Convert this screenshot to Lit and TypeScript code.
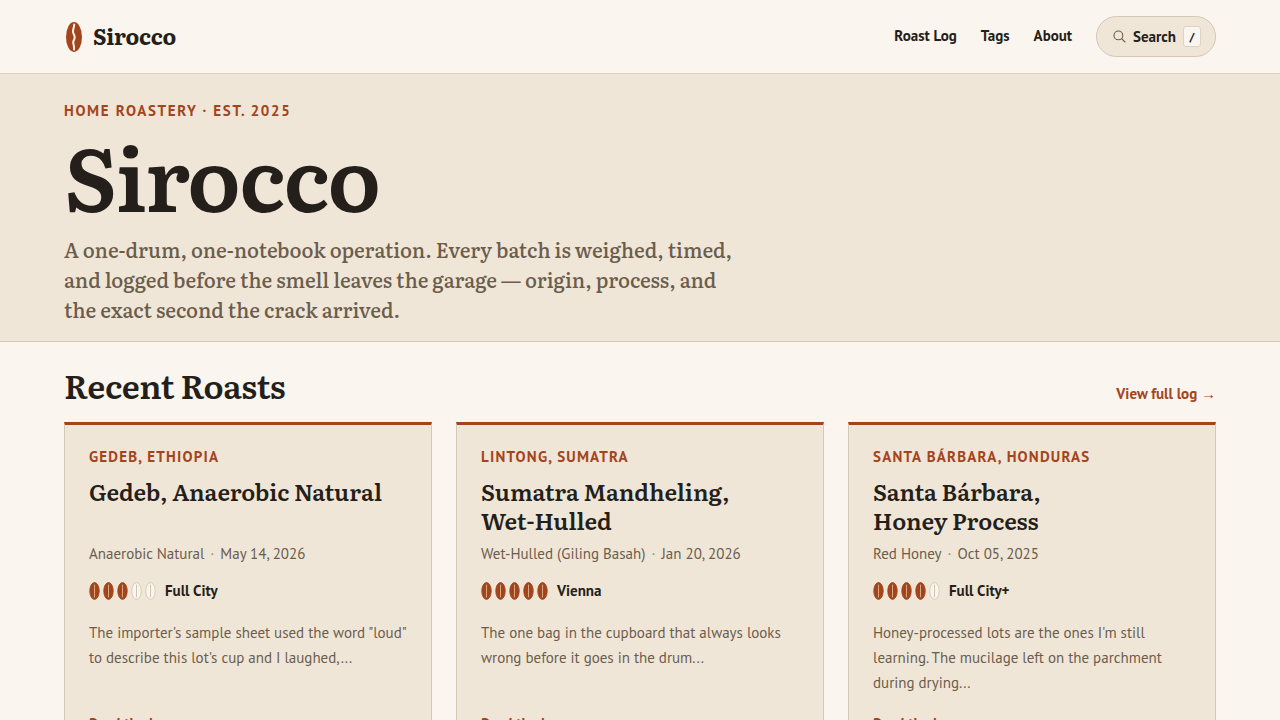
import { LitElement, html, css } from "lit";
import { customElement, property } from "lit/decorators.js";

interface Roast {
  origin: string;
  title: string;
  process: string;
  date: string;
  level: number;
  levelName: string;
  excerpt: string;
}

const roasts: Roast[] = [
  {
    origin: "Gedeb, Ethiopia",
    title: "Gedeb, Anaerobic Natural",
    process: "Anaerobic Natural",
    date: "May 14, 2026",
    level: 3,
    levelName: "Full City",
    excerpt: "The importer's sample sheet used the word \"loud\" to describe this lot's cup and I laughed,...",
  },
  {
    origin: "Lintong, Sumatra",
    title: "Sumatra Mandheling, Wet-Hulled",
    process: "Wet-Hulled (Giling Basah)",
    date: "Jan 20, 2026",
    level: 5,
    levelName: "Vienna",
    excerpt: "The one bag in the cupboard that always looks wrong before it goes in the drum...",
  },
  {
    origin: "Santa Bárbara, Honduras",
    title: "Santa Bárbara, Honey Process",
    process: "Red Honey",
    date: "Oct 05, 2025",
    level: 4,
    levelName: "Full City+",
    excerpt: "Honey-processed lots are the ones I'm still learning. The mucilage left on the parchment during drying...",
  },
];

@customElement("roast-card")
class RoastCard extends LitElement {
  @property({ attribute: false }) roast!: Roast;

  static styles = css`
    :host {
      display: block;
      box-sizing: border-box;
      padding: 23px 24px 24px;
      background: #f0e6d8;
      border: 1px solid #d3c8b6;
      border-top: 3px solid #a3451c;
    }
    .origin {
      margin: 0 0 12px;
      color: #a3451c;
      font-size: 15px;
      line-height: 17px;
      font-weight: 700;
      letter-spacing: 0.08em;
      text-transform: uppercase;
    }
    .title {
      margin: 0 0 9px;
      min-height: 58px;
      font-family: "Literata", "Liberation Serif", serif;
      font-size: 23px;
      line-height: 29px;
      font-weight: 600;
      text-wrap: balance;
    }
    .meta {
      display: flex;
      gap: 6px;
      margin: 0 0 16px;
      color: #6b5d4c;
      line-height: 20px;
    }
    .dot {
      opacity: 0.7;
    }
    .level {
      display: flex;
      align-items: center;
      gap: 9px;
      margin: 0 0 18px;
      line-height: 22px;
      font-weight: 700;
    }
    .beans {
      display: flex;
      gap: 3px;
    }
    .bean {
      display: block;
      width: 11px;
      height: 18px;
      fill: #faf5ee;
      stroke: #d3c8b6;
    }
    .bean.filled {
      fill: #a3451c;
      stroke: #a3451c;
    }
    .seam {
      stroke: #c9bda9;
    }
    .filled .seam {
      stroke: #dcb396;
    }
    .excerpt {
      margin: 0 0 17px;
      min-height: 75px;
      color: #6b5d4c;
      line-height: 25px;
    }
    .more {
      color: #a3451c;
      font-weight: 700;
      line-height: 20px;
      text-decoration: none;
    }
  `;

  render() {
    const r = this.roast;
    return html`
      <p class="origin">${r.origin}</p>
      <h3 class="title">${r.title}</h3>
      <p class="meta">
        <span>${r.process}</span><span class="dot">·</span><time>${r.date}</time>
      </p>
      <div class="level">
        <span class="beans" role="img" aria-label="Roast level ${r.level} of 5">
          ${[1, 2, 3, 4, 5].map((n) => this.bean(n <= r.level))}
        </span>
        <span>${r.levelName}</span>
      </div>
      <p class="excerpt">${r.excerpt}</p>
      <a class="more" href="#">Read the log →</a>
    `;
  }

  private bean(filled: boolean) {
    return html`<svg class="bean ${filled ? "filled" : ""}" viewBox="0 0 11 18" aria-hidden="true">
      <ellipse cx="5.5" cy="9" rx="4.7" ry="8.4" stroke-width="0.9" />
      <path class="seam" d="M5.5 3 C5.2 5 5.8 7 5.5 9 C5.2 11 5.8 13 5.5 15" fill="none"
        stroke-width="0.9" stroke-linecap="round" />
    </svg>`;
  }
}

@customElement("app-root")
class AppRoot extends LitElement {
  static styles = css`
    :host {
      display: block;
      min-height: 100vh;
      background: #faf5ee;
      color: #241f1a;
      font-family: "PT Sans", "Noto Sans", sans-serif;
      font-size: 15px;
      line-height: 24px;
    }
    a {
      color: inherit;
      text-decoration: none;
    }
    .header {
      display: flex;
      align-items: center;
      justify-content: space-between;
      padding: 16px 64px;
      border-bottom: 1px solid #dcd3c5;
    }
    .brand {
      display: flex;
      align-items: flex-start;
      gap: 9px;
      font-family: "Literata", "Liberation Serif", serif;
      font-size: 22px;
      line-height: 28px;
      font-weight: 700;
      letter-spacing: -0.01em;
    }
    .mark {
      display: block;
      width: 20px;
      height: 30px;
    }
    .nav {
      display: flex;
      align-items: center;
      gap: 24px;
      font-weight: 700;
    }
    .link {
      padding-bottom: 2px;
    }
    .search {
      display: flex;
      align-items: center;
      gap: 7px;
      height: 41px;
      padding: 0 14px 0 16px;
      background: #f0e6d8;
      border: 1px solid #d3c8b6;
      border-radius: 21px;
      color: inherit;
      font: inherit;
    }
    .glass {
      display: block;
      width: 13px;
      height: 13px;
      color: #6b5d4c;
    }
    .key {
      box-sizing: border-box;
      width: 18px;
      height: 21px;
      background: #faf5ee;
      border: 1px solid #dcd3c5;
      border-radius: 3px;
      font-family: inherit;
      font-size: 12px;
      line-height: 20px;
      text-align: center;
    }
    .hero {
      padding: 26px 64px 17px;
      background: #f0e6d8;
      border-bottom: 1px solid #d3c8b6;
    }
    .eyebrow {
      margin: 0 0 10px;
      color: #a3451c;
      font-size: 15px;
      line-height: 22px;
      font-weight: 700;
      letter-spacing: 0.11em;
      text-transform: uppercase;
    }
    .name {
      margin: 0 0 18px;
      font-family: "Literata", "Liberation Serif", serif;
      font-size: 88px;
      line-height: 84px;
      font-weight: 600;
      letter-spacing: -0.02em;
    }
    .lede {
      max-width: 680px;
      margin: 0;
      color: #6b5d4c;
      font-family: "Literata", "Liberation Serif", serif;
      font-size: 20px;
      line-height: 30px;
      font-weight: 500;
    }
    .recent {
      padding: 23px 64px 64px;
    }
    .heading {
      display: flex;
      align-items: baseline;
      justify-content: space-between;
      margin: 0 0 16px;
    }
    .heading-title {
      margin: 0;
      font-family: "Literata", "Liberation Serif", serif;
      font-size: 33px;
      line-height: 40px;
      font-weight: 600;
      letter-spacing: -0.01em;
    }
    .all {
      color: #a3451c;
      font-weight: 700;
    }
    .cards {
      display: grid;
      grid-template-columns: repeat(3, 1fr);
      gap: 24px;
    }
  `;

  render() {
    return html`
      <header class="header">
        <a class="brand" href="#">
          <svg class="mark" viewBox="0 0 20 30" aria-hidden="true">
            <ellipse cx="10" cy="15" rx="8" ry="15" fill="#a3451c" />
            <path d="M10.2 2.5 C10.2 5 9 7 9 9.5 C9 12 10.7 13 10.7 15.3 C10.7 17.4 9.2 18.4 9.2 20.3 C9.2 22.5 10.5 24 10 27.5"
              fill="none" stroke="#faf5ee" stroke-width="2" stroke-linecap="round" />
          </svg>
          <span>Sirocco</span>
        </a>
        <nav class="nav">
          <a class="link" href="#">Roast Log</a>
          <a class="link" href="#">Tags</a>
          <a class="link" href="#">About</a>
          <button class="search" type="button">
            <svg class="glass" viewBox="0 0 13 13" fill="none" stroke="currentColor"
              stroke-width="1.1" stroke-linecap="round" aria-hidden="true">
              <circle cx="5.4" cy="5.4" r="4.4" />
              <path d="M8.8 8.8 L12 12" />
            </svg>
            <span>Search</span>
            <kbd class="key">/</kbd>
          </button>
        </nav>
      </header>
      <main>
        <section class="hero">
          <p class="eyebrow">Home roastery · Est. 2025</p>
          <h1 class="name">Sirocco</h1>
          <p class="lede">
            A one-drum, one-notebook operation. Every batch is weighed, timed, and logged before the
            smell leaves the garage — origin, process, and the exact second the crack arrived.
          </p>
        </section>
        <section class="recent">
          <div class="heading">
            <h2 class="heading-title">Recent Roasts</h2>
            <a class="all" href="#">View full log →</a>
          </div>
          <div class="cards">
            ${roasts.map((r) => html`<roast-card .roast=${r}></roast-card>`)}
          </div>
        </section>
      </main>
    `;
  }
}
